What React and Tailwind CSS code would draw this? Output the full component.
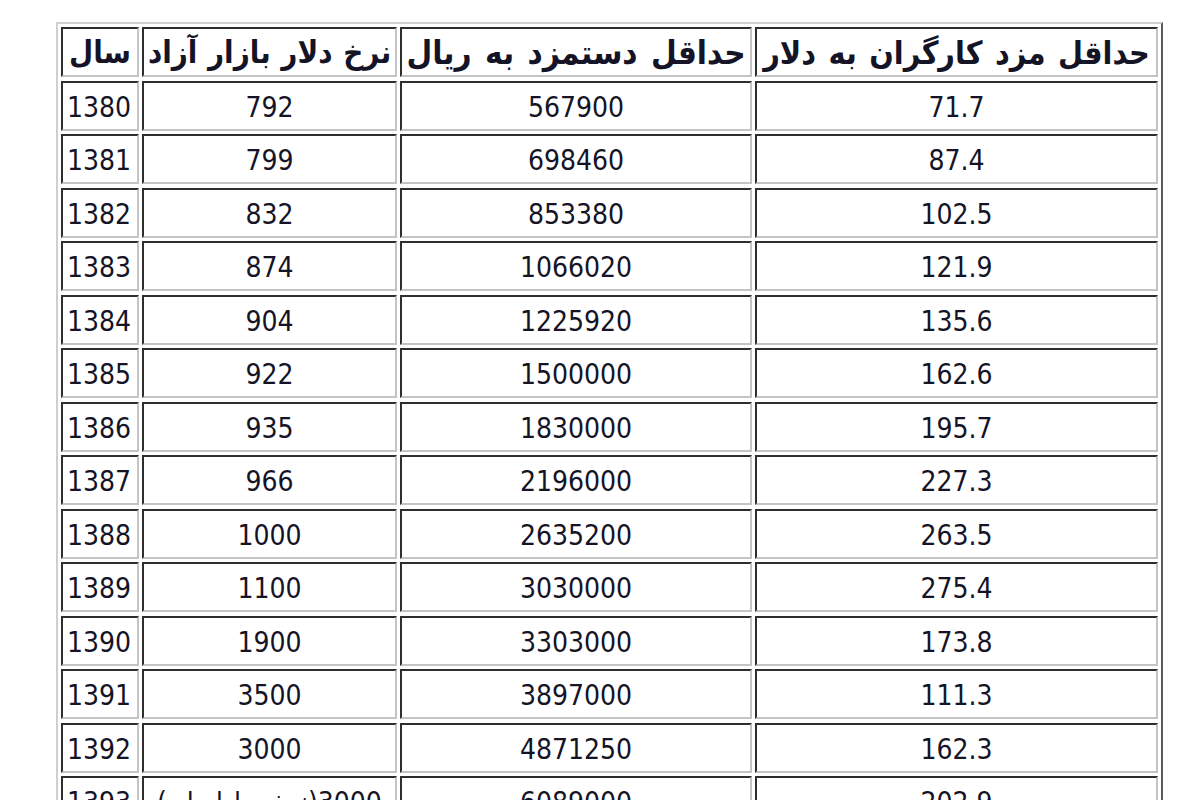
import React from "react";

const rows = [
  ["1380", "792", "567900", "71.7"],
  ["1381", "799", "698460", "87.4"],
  ["1382", "832", "853380", "102.5"],
  ["1383", "874", "1066020", "121.9"],
  ["1384", "904", "1225920", "135.6"],
  ["1385", "922", "1500000", "162.6"],
  ["1386", "935", "1830000", "195.7"],
  ["1387", "966", "2196000", "227.3"],
  ["1388", "1000", "2635200", "263.5"],
  ["1389", "1100", "3030000", "275.4"],
  ["1390", "1900", "3303000", "173.8"],
  ["1391", "3500", "3897000", "111.3"],
  ["1392", "3000", "4871250", "162.3"],
  ["1393", "3000(نرخ مبادله ای)", "6089000", "202.9"],
];

const headers = [
  { t: "سال", c: "text-[31px]" },
  { t: "نرخ دلار بازار آزاد", c: "text-[31px] [word-spacing:1px]" },
  { t: "حداقل دستمزد به ریال", c: "text-[33px] [word-spacing:3px]" },
  { t: "حداقل مزد کارگران به دلار", c: "text-[32px] [word-spacing:2.5px]" },
];

const cell =
  "h-[50px] border-2 border-t-[#2e2e2e] border-l-[#2e2e2e] border-b-[#c4c4c4] border-r-[#c4c4c4] bg-white flex items-center overflow-hidden whitespace-nowrap";

export default function App() {
  return (
    <div className="w-[1200px] h-[800px] bg-white overflow-hidden pl-[56px] pt-[22px] [font-family:'DejaVu_Sans_Condensed','DejaVu_Sans',sans-serif] text-[#141426]">
      <div className="inline-block border-2 border-t-[#cfcfcf] border-l-[#cfcfcf] border-b-[#5a5a5a] border-r-[#5a5a5a] p-[3px] bg-white">
        <div className="grid grid-cols-[78px_255px_352px_403px] gap-x-[3px] gap-y-[3.5px]">
          {headers.map((h, i) => (
            <div key={i} className={cell + " justify-center pt-[1px]"}>
              <span dir="rtl" className={"font-bold leading-none " + h.c}>
                {h.t}
              </span>
            </div>
          ))}
          {rows.map((r, ri) =>
            r.map((v, ci) => (
              <div key={ri + "-" + ci} className={cell + (ci === 0 ? " justify-start pl-[4px] pt-[4px]" : " justify-center pt-[4px]")}>
                <span dir={ci === 1 && ri === 13 ? "rtl" : "ltr"} className="text-[28px] leading-none">
                  {v}
                </span>
              </div>
            ))
          )}
        </div>
      </div>
    </div>
  );
}
